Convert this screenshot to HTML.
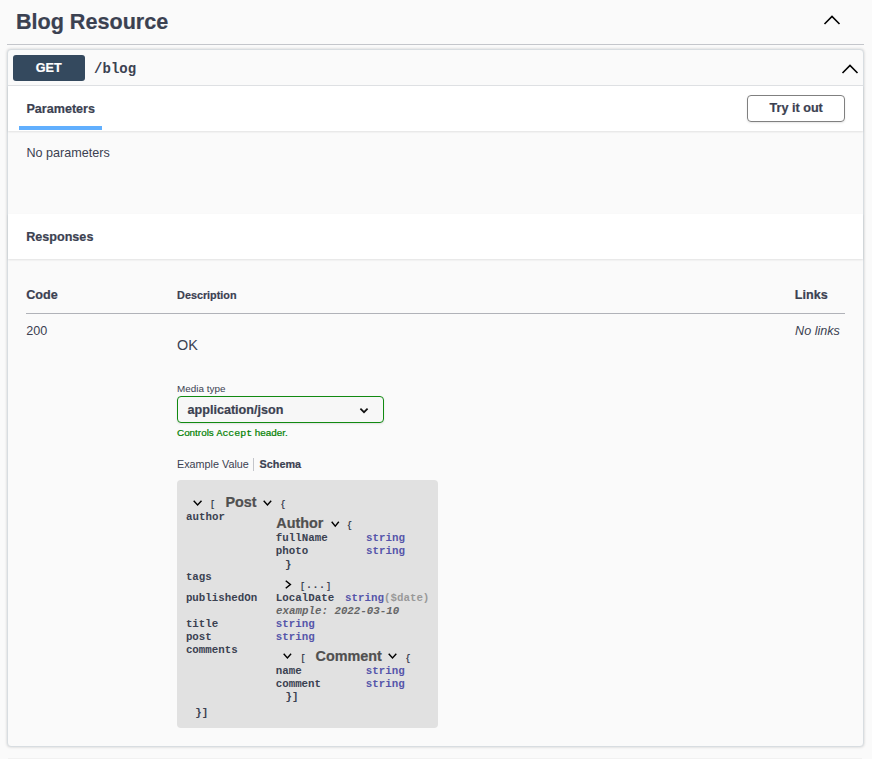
<!DOCTYPE html>
<html><head><meta charset="utf-8"><title>Blog Resource</title>
<style>

*{box-sizing:border-box;margin:0;padding:0}
html,body{width:872px;height:759px;overflow:hidden;background:#fafafa;font-family:"Liberation Sans",sans-serif;color:#3b4151}
.a{position:absolute;white-space:pre;line-height:1}
.b{font-weight:bold;-webkit-text-stroke:0.2px currentColor}
.b.m{-webkit-text-stroke:0}
.m{font-family:"Liberation Mono",monospace}
.i{font-style:italic}
.r{position:absolute}

</style></head><body>
<div class="r" style="left:7px;top:44px;width:857px;height:1px;background:#c4c6cb"></div>
<svg class="r" style="left:822px;top:12.5px" width="20" height="14" viewBox="0 0 20 14"><polyline points="2.5,11 10,3.5 17.5,11" fill="none" stroke="#000" stroke-width="1.6"/></svg>
<div class="r" style="left:7px;top:49px;width:857px;height:698px;border:1px solid #d8dde1;border-radius:4px;box-shadow:0 0 3px rgba(0,0,0,.19);background:#fafafa"></div>
<div class="r" style="left:8px;top:85px;width:855px;height:1px;background:#dfe1e4"></div>
<div class="r" style="left:13px;top:55px;width:72px;height:26px;border-radius:3px;background:#34495e"></div>
<svg class="r" style="left:840px;top:61.5px" width="20" height="14" viewBox="0 0 20 14"><polyline points="2.5,11 10,3.5 17.5,11" fill="none" stroke="#000" stroke-width="1.6"/></svg>
<div class="r" style="left:8px;top:86px;width:855px;height:45px;background:#fff;box-shadow:0 1px 2px rgba(0,0,0,.1)"></div>
<div class="r" style="left:19px;top:126px;width:83px;height:4px;background:#61affe"></div>
<div class="r" style="left:747px;top:95px;width:98px;height:27px;border:1.5px solid #808080;border-radius:4px;box-shadow:0 1px 2px rgba(0,0,0,.1)"></div>
<div class="r" style="left:8px;top:214px;width:855px;height:45px;background:#fff;box-shadow:0 1px 2px rgba(0,0,0,.1)"></div>
<div class="r" style="left:26px;top:313px;width:819px;height:1px;background:#b0b2b8"></div>
<div class="r" style="left:177px;top:396px;width:207px;height:27px;border:1.5px solid #118a11;border-radius:4px;background:#f7f7f7;box-shadow:0 1px 2px rgba(0,0,0,.1)"></div>
<svg class="r" style="left:358px;top:405.8px" width="12" height="10" viewBox="0 0 12 10"><polyline points="2.4,2.6 6,6.2 9.6,2.6" fill="none" stroke="#111" stroke-width="1.7"/></svg>
<div class="r" style="left:253px;top:458px;width:1px;height:13px;background:#c4c6cb"></div>
<div class="r" style="left:177px;top:480px;width:261px;height:248px;border-radius:4px;background:#e1e1e1"></div>
<div class="r" style="left:8px;top:758px;width:854px;height:1px;background:#f1f1f1"></div>
<svg class="r" style="left:191.30px;top:498.10px" width="13.20" height="9.70"><polyline points="2.70,2.70 6.60,7.00 10.50,2.70" fill="none" stroke="#000" stroke-width="1.4" stroke-linecap="butt"/></svg>
<svg class="r" style="left:261.20px;top:498.10px" width="12.90" height="9.70"><polyline points="2.70,2.70 6.45,7.00 10.20,2.70" fill="none" stroke="#000" stroke-width="1.4" stroke-linecap="butt"/></svg>
<svg class="r" style="left:328.50px;top:518.60px" width="12.50" height="9.90"><polyline points="2.70,2.70 6.25,7.20 9.80,2.70" fill="none" stroke="#000" stroke-width="1.4" stroke-linecap="butt"/></svg>
<svg class="r" style="left:283.00px;top:577.60px" width="10.10" height="13.00"><polyline points="2.75,2.75 7.35,6.50 2.75,10.25" fill="none" stroke="#000" stroke-width="1.5"/></svg>
<svg class="r" style="left:281.30px;top:651.40px" width="12.80" height="9.60"><polyline points="2.70,2.70 6.40,6.90 10.10,2.70" fill="none" stroke="#000" stroke-width="1.4" stroke-linecap="butt"/></svg>
<svg class="r" style="left:386.30px;top:651.40px" width="13.00" height="9.60"><polyline points="2.70,2.70 6.50,6.90 10.30,2.70" fill="none" stroke="#000" stroke-width="1.4" stroke-linecap="butt"/></svg>
<div class="a b" style="left:15.90px;top:11.00px;font-size:21.6px;">Blog Resource</div>
<div class="a b" style="left:35.80px;top:62.00px;font-size:12.6px;color:#fff">GET</div>
<div class="a b m" style="left:94.10px;top:62.00px;font-size:14px;">/blog</div>
<div class="a b" style="left:26.40px;top:103.00px;font-size:12.6px;">Parameters</div>
<div class="a b" style="left:769.60px;top:102.00px;font-size:12.6px;">Try it out</div>
<div class="a " style="left:26.40px;top:147.00px;font-size:12.6px;">No parameters</div>
<div class="a b" style="left:26.20px;top:231.00px;font-size:12.6px;">Responses</div>
<div class="a b" style="left:26.20px;top:289.00px;font-size:12.6px;">Code</div>
<div class="a b" style="left:177.10px;top:290.00px;font-size:10.8px;">Description</div>
<div class="a b" style="left:794.80px;top:289.00px;font-size:12.6px;">Links</div>
<div class="a " style="left:26.20px;top:325.00px;font-size:12.6px;">200</div>
<div class="a i" style="left:795.10px;top:325.00px;font-size:12.6px;">No links</div>
<div class="a " style="left:177.10px;top:338.00px;font-size:14.4px;">OK</div>
<div class="a " style="left:177.10px;top:384.00px;font-size:9.9px;">Media type</div>
<div class="a b" style="left:187.50px;top:404.00px;font-size:12.6px;">application/json</div>
<div class="a " style="left:177.00px;top:428.00px;font-size:9.9px;color:#008000;-webkit-text-stroke:0.2px currentColor">Controls <span class="m">Accept</span> header.</div>
<div class="a " style="left:177.00px;top:459.00px;font-size:10.8px;">Example Value</div>
<div class="a b" style="left:259.60px;top:459.00px;font-size:10.8px;">Schema</div>
<div class="a b m" style="left:210.00px;top:501.00px;font-size:8.5px;">[</div>
<div class="a b" style="left:225.40px;top:495.00px;font-size:14.4px;color:#505050">Post</div>
<div class="a b m" style="left:280.40px;top:501.00px;font-size:8.5px;">{</div>
<div class="a b m" style="left:186.00px;top:512.00px;font-size:10.8px;">author</div>
<div class="a b" style="left:276.30px;top:516.00px;font-size:14.4px;color:#505050">Author</div>
<div class="a b m" style="left:347.10px;top:522.00px;font-size:8.5px;">{</div>
<div class="a b m" style="left:275.80px;top:533.00px;font-size:10.8px;">fullName</div>
<div class="a b m" style="left:366.00px;top:533.00px;font-size:10.8px;color:#55a">string</div>
<div class="a b m" style="left:275.80px;top:546.00px;font-size:10.8px;">photo</div>
<div class="a b m" style="left:366.00px;top:546.00px;font-size:10.8px;color:#55a">string</div>
<div class="a b m" style="left:285.10px;top:560.00px;font-size:10.8px;">}</div>
<div class="a b m" style="left:185.90px;top:572.00px;font-size:10.8px;">tags</div>
<div class="a b m" style="left:300.10px;top:583.00px;font-size:8.5px;">[</div>
<div class="a b m" style="left:305.70px;top:580.00px;font-size:10.8px;">...</div>
<div class="a b m" style="left:326.10px;top:583.00px;font-size:8.5px;">]</div>
<div class="a b m" style="left:185.90px;top:593.00px;font-size:10.8px;">publishedOn</div>
<div class="a b m" style="left:275.80px;top:593.00px;font-size:10.8px;">LocalDate</div>
<div class="a b m" style="left:345.10px;top:593.00px;font-size:10.8px;color:#55a">string<span style="color:#999">($date)</span></div>
<div class="a b m i" style="left:276.10px;top:606.00px;font-size:10.8px;color:#666">example: 2022-03-10</div>
<div class="a b m" style="left:185.90px;top:619.00px;font-size:10.8px;">title</div>
<div class="a b m" style="left:275.80px;top:619.00px;font-size:10.8px;color:#55a">string</div>
<div class="a b m" style="left:185.90px;top:632.00px;font-size:10.8px;">post</div>
<div class="a b m" style="left:275.80px;top:632.00px;font-size:10.8px;color:#55a">string</div>
<div class="a b m" style="left:185.90px;top:645.00px;font-size:10.8px;">comments</div>
<div class="a b m" style="left:300.50px;top:655.00px;font-size:8.5px;">[</div>
<div class="a b" style="left:315.50px;top:649.00px;font-size:14.4px;color:#505050">Comment</div>
<div class="a b m" style="left:405.50px;top:655.00px;font-size:8.5px;">{</div>
<div class="a b m" style="left:275.70px;top:666.00px;font-size:10.8px;">name</div>
<div class="a b m" style="left:365.80px;top:666.00px;font-size:10.8px;color:#55a">string</div>
<div class="a b m" style="left:275.70px;top:679.00px;font-size:10.8px;">comment</div>
<div class="a b m" style="left:365.80px;top:679.00px;font-size:10.8px;color:#55a">string</div>
<div class="a b m" style="left:285.60px;top:692.00px;font-size:10.8px;">}]</div>
<div class="a b m" style="left:195.20px;top:708.00px;font-size:10.8px;">}]</div>
</body></html>
